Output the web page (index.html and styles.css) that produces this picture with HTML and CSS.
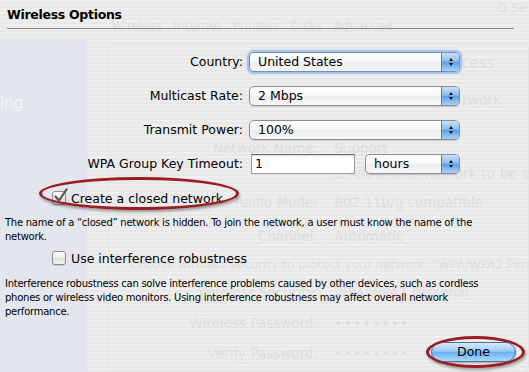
FILE: index.html
```html
<!DOCTYPE html>
<html lang="en">

<head>
  <meta charset="utf-8">
  <title>Wireless Options</title>
  <link rel="stylesheet" href="styles.css">
</head>

<body>
  <!-- faded preference window behind the sheet -->
  <div class="ghost" aria-hidden="true">
    <div class="ghost-side"><span class="ghost-sel">ing</span></div>
    <div class="ghost-search">Q Se</div>
    <div class="ghost-tabs">Wireless &nbsp; Internet &nbsp; Printers &nbsp; Disks &nbsp; Advanced</div>
    <div class="ghost-box"></div>
    <div class="ghost-access">Access</div>
    <div class="ghost-t g1">twork</div>
    <div class="ghost-t g2"><span class="gl">Network Name:</span> Support</div>
    <div class="ghost-t g3"><span class="gchk"></span>Allow this network to be exte</div>
    <div class="ghost-t g4"><span class="gl">Radio Mode:</span> 802.11b/g compatible</div>
    <div class="ghost-t g5"><span class="gl">Channel:</span> Automatic</div>
    <div class="ghost-t g6">Choose wireless security to protect your network. “WPA/WPA2 Personal” is recomm</div>
    <div class="ghost-t g7"><span class="gl">Wireless Security:</span> WPA/WPA2 Personal</div>
    <div class="ghost-t g8"><span class="gl">Wireless Password:</span> <span class="dots">••••••••</span></div>
    <div class="ghost-t g9"><span class="gl">Verify Password:</span> <span class="dots">••••••••</span></div>
  </div>

  <div class="sheet">
    <h1 class="title">Wireless Options</h1>
    <div class="rule"></div>

    <div class="form">
      <span class="label">Country:</span>
      <div class="popup focus">
        <span class="value">United States</span>
        <span class="arrows"><i class="up"></i><i class="down"></i></span>
      </div>

      <span class="label">Multicast Rate:</span>
      <div class="popup">
        <span class="value">2 Mbps</span>
        <span class="arrows"><i class="up"></i><i class="down"></i></span>
      </div>

      <span class="label">Transmit Power:</span>
      <div class="popup">
        <span class="value">100%</span>
        <span class="arrows"><i class="up"></i><i class="down"></i></span>
      </div>

      <span class="label">WPA Group Key Timeout:</span>
      <div class="field-row">
        <div class="textfield">1</div>
        <div class="popup small">
          <span class="value">hours</span>
          <span class="arrows"><i class="up"></i><i class="down"></i></span>
        </div>
      </div>
    </div>

    <div class="check-row first">
      <span class="checkbox">
        <svg class="tick" width="16" height="16" viewBox="0 0 16 16">
          <path d="M2.5 8.5 L6 12.5 L13.5 1.5" fill="none" stroke="#555" stroke-width="2.2" stroke-linecap="round" stroke-linejoin="round"/>
        </svg>
      </span>
      <span class="check-label">Create a closed network</span>
      <span class="circle circle-check"></span>
    </div>
    <p class="note">The name of a “closed” network is hidden. To join the network, a user must know the name of the network.</p>

    <div class="check-row second">
      <span class="checkbox"></span>
      <span class="check-label">Use interference robustness</span>
    </div>
    <p class="note para">Interference robustness can solve interference problems caused by other devices, such as cordless phones or wireless video monitors. Using interference robustness may affect overall network performance.</p>

    <div class="actions">
      <div class="done-wrap">
        <button class="done">Done</button>
        <span class="circle circle-done"></span>
      </div>
    </div>
  </div>
</body>

</html>
```

FILE: styles.css
```css
body {
  margin: 0;
  width: 529px;
  height: 372px;
  overflow: hidden;
  position: relative;
  font-family: 'DejaVu Sans', 'Liberation Sans', sans-serif;
  color: #000;
  background: repeating-linear-gradient(#eeeeee 0 2px, #e8e8e8 2px 4px);
}

/* ---------- faded window behind ---------- */
.ghost {
  position: absolute;
  inset: 0;
  overflow: hidden;
  color: #dedede;
  font-size: 13px;
  white-space: nowrap;
}

.ghost-side {
  position: absolute;
  left: 0;
  top: 40px;
  width: 87px;
  height: 332px;
  background: #e3e7ed;
}

.ghost-sel {
  position: absolute;
  left: 0;
  top: 54px;
  font-size: 15px;
  color: #f2f4f7;
}

.ghost-search {
  position: absolute;
  left: 497px;
  top: 0;
}

.ghost-tabs {
  position: absolute;
  left: 112px;
  top: 19px;
  font-size: 12px;
}

.ghost-box {
  position: absolute;
  left: 108px;
  top: 44px;
  right: 0;
  bottom: 0;
  border: 1px solid #e4e4e4;
  border-radius: 6px;
}

.ghost-access {
  position: absolute;
  left: 430px;
  top: 52px;
  padding: 1px 0 1px 12px;
  width: 100px;
  border: 1px solid #e4e4e4;
  font-size: 15px;
}

.ghost-t {
  position: absolute;
  font-size: 13.5px;
}

.gl {
  display: inline-block;
  width: 318px;
  text-align: right;
  margin-right: 12px;
}

.dots {
  letter-spacing: 1.5px;
}

.gchk {
  display: inline-block;
  width: 12px;
  height: 12px;
  border: 1px solid #e0e0e0;
  margin-right: 4px;
}

.g1 { left: 462px; top: 92px; font-size: 14px; }
.g2 { left: 0; top: 140px; }
.g3 { left: 330px; top: 164px; font-size: 14px; }
.g4 { left: 0; top: 194px; }
.g5 { left: 0; top: 228px; }
.g6 { left: 130px; top: 258px; font-size: 12px; }
.g7 { left: 0; top: 284px; }
.g8 { left: 0; top: 315px; }
.g9 { left: 0; top: 345px; }

/* ---------- sheet ---------- */
.sheet {
  position: relative;
  padding: 0 5px;
}

.title {
  margin: 0;
  padding: 7px 0 0 2px;
  height: 15px;
  font-size: 12.5px;
  font-weight: bold;
  letter-spacing: -0.3px;
}

.rule {
  margin: 6px 10px 0 2px;
  height: 1px;
  background: #8a8a8a;
}

.form {
  display: grid;
  grid-template-columns: 238px 211px;
  column-gap: 6px;
  row-gap: 14px;
  margin-top: 23px;
  font-size: 12.5px;
}

.label {
  text-align: right;
  line-height: 20px;
}

.popup {
  height: 20px;
  box-sizing: border-box;
  display: flex;
  border: 1px solid #8c8c8c;
  border-radius: 5px;
  background: linear-gradient(#ffffff, #f7f7f7 50%, #ececec 51%, #f8f8f8);
  box-shadow: 0 1px 1px rgba(0, 0, 0, 0.15);
  overflow: hidden;
}

.popup.focus {
  border-color: #6d90c0;
  box-shadow: 0 0 0 2px #a6c3e8, 0 0 3px 2px #c3d7f1;
}

.popup .value {
  flex: 1;
  padding-left: 8px;
  line-height: 18px;
  font-size: 12.5px;
}

.arrows {
  width: 17px;
  border-left: 1px solid #5a7fb3;
  background: linear-gradient(#c9e0f7, #8ebcec 45%, #5e9fe3 52%, #a6d2fb);
  display: flex;
  flex-direction: column;
  align-items: center;
  justify-content: center;
  gap: 2px;
}

.arrows i {
  width: 0;
  height: 0;
  border-left: 2.5px solid transparent;
  border-right: 2.5px solid transparent;
}

.arrows .up { border-bottom: 3px solid #111; }
.arrows .down { border-top: 3px solid #111; }

.field-row {
  display: flex;
  gap: 10px;
  align-items: center;
}

.textfield {
  width: 104px;
  height: 20px;
  box-sizing: border-box;
  margin-left: 2px;
  border: 1px solid #9a9a9a;
  border-top-color: #6f6f6f;
  background: #fff;
  box-shadow: inset 0 1px 1px rgba(0, 0, 0, 0.15);
  padding-left: 3px;
  line-height: 18px;
  font-size: 12.5px;
}

.popup.small {
  width: 95px;
}

/* ---------- checkboxes ---------- */
.check-row {
  position: relative;
  display: flex;
  align-items: center;
  height: 18px;
  padding-left: 47px;
  font-size: 12.5px;
}

.check-row.first { margin-top: 15px; }
.check-row.second { margin-top: 5px; }

.checkbox {
  position: relative;
  width: 12px;
  height: 12px;
  border: 1px solid #8a8a8a;
  border-radius: 3px;
  background: linear-gradient(#ffffff, #ededed 50%, #dedede 51%, #f4f4f4);
  box-shadow: 0 1px 1px rgba(0, 0, 0, 0.15);
  margin-right: 5px;
}

.tick {
  position: absolute;
  left: 0;
  top: -4px;
}

.note {
  margin: 9px 0 0;
  font-size: 10px;
  line-height: 14px;
  letter-spacing: -0.25px;
  padding-right: 25px;
}

.note.para { margin-top: 10px; }

/* ---------- done ---------- */
.actions {
  display: flex;
  justify-content: flex-end;
  margin-top: 22px;
  padding-right: 8px;
}

.done-wrap {
  position: relative;
}

.done {
  width: 85px;
  height: 20px;
  padding: 0;
  border: 1px solid #4d6f9e;
  border-radius: 10px;
  background: linear-gradient(#d5e9fb, #9ecbf3 45%, #6cb0ee 52%, #a9dafe);
  font-family: 'DejaVu Sans', 'Liberation Sans', sans-serif;
  font-size: 12.5px;
  color: #000;
  box-shadow: 0 1px 2px rgba(0, 0, 0, 0.3);
}

/* red circle marks drawn over the sheet */
.circle {
  position: absolute;
  border: 3px solid #9a1d23;
  border-radius: 50%;
  box-shadow: 1px 2px 3px rgba(0, 0, 0, 0.35), inset 0 0 1px rgba(255, 255, 255, 0.3);
  pointer-events: none;
}

.circle-check {
  left: 34px;
  top: -12px;
  width: 194px;
  height: 27px;
}

.circle-done {
  left: -5px;
  top: -5px;
  width: 93px;
  height: 26px;
}
```
